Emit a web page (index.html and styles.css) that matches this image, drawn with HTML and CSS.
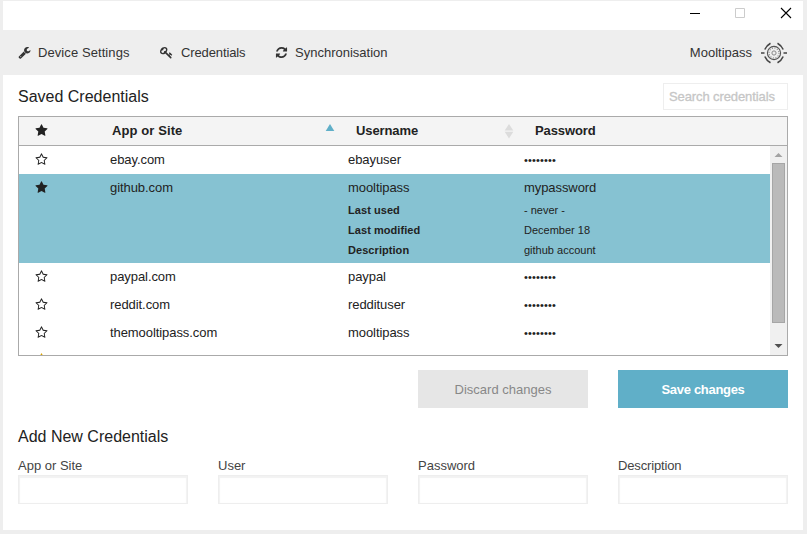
FILE: index.html
```html
<!DOCTYPE html>
<html lang="en">
<head>
<meta charset="utf-8">
<title>Mooltipass</title>
<link rel="stylesheet" href="styles.css">
</head>
<body>
<svg class="sprite" aria-hidden="true">
  <symbol id="star" viewBox="0 0 1792 1792"><path d="M1728 647q0 22-26 48l-363 354 86 500q1 7 1 20 0 21-10.5 35.500t-30.500 14.500q-19 0-40-12l-449-236-449 236q-22 12-40 12-21 0-31.500-14.500t-10.500-35.500q0-6 2-20l86-500-364-354q-25-27-25-48 0-37 56-46l502-73 225-455q19-41 49-41t49 41l225 455 502 73q56 9 56 46z"/></symbol>
  <symbol id="star-o" viewBox="0 0 1792 1792"><path d="M1201 1004l306-297-422-62-189-382-189 382-422 62 306 297-73 421 378-199 377 199zm527-357q0 22-26 48l-363 354 86 500q1 7 1 20 0 50-41 50-19 0-40-12l-449-236-449 236q-22 12-40 12-21 0-31.500-14.500t-10.500-35.500q0-6 2-20l86-500-364-354q-25-27-25-48 0-37 56-46l502-73 225-455q19-41 49-41t49 41l225 455 502 73q56 9 56 46z"/></symbol>
</svg>
<div class="window">
  <header class="titlebar">
    <svg class="control" viewBox="0 0 12 12"><path d="M0 6.500h10" stroke="#000"/></svg>
    <svg class="control" viewBox="0 0 12 12"><path d="M.5 1.500h9v9h-9z" fill="none" stroke="#ccc"/></svg>
    <svg class="control" viewBox="0 0 12 12"><path d="M1 1l10 10M11 1L1 11" stroke="#000" stroke-width="1.100"/></svg>
  </header>
  <nav class="nav">
    <a class="tab tab-settings"><svg class="icon" viewBox="0 0 1792 1792"><path d="M448 1472q0-26-19-45t-45-19-45 19-19 45 19 45 45 19 45-19 19-45zm644-420l-682 682q-37 37-90 37-52 0-91-37l-106-108q-38-36-38-90 0-53 38-91l681-681q39 98 114.500 173.500t173.500 114.500zm634-435q0 39-23 106-47 134-164.500 217.500t-258.500 83.500q-185 0-316.500-131.500t-131.500-316.500 131.500-316.500 316.500-131.500q58 0 121.500 16.500t107.500 46.500q16 11 16 28t-16 28l-293 169v224l193 107q5-3 79-48.500t135.500-81 70.500-35.500q15 0 23.500 10t8.500 25z"/></svg><span>Device Settings</span></a>
    <a class="tab tab-credentials"><svg class="icon" viewBox="0 0 1792 1792"><path d="M832 512q0-80-56-136t-136-56-136 56-56 136q0 42 19 83-41-19-83-19-80 0-136 56t-56 136 56 136 136 56 136-56 56-136q0-42-19-83 41 19 83 19 80 0 136-56t56-136zm851 704q0 17-49 66t-66 49q-9 0-28.500-16t-36.500-33-38.500-40-24.500-26l-96 96 220 220q28 28 28 68 0 42-39 81t-81 39q-40 0-68-28l-671-671q-176 131-365 131-163 0-265.500-102.500t-102.500-265.500q0-160 95-313t248-248 313-95q163 0 265.500 102.500t102.500 265.500q0 189-131 365l355 355 96-96q-3-3-26-24.500t-40-38.500-33-36.500-16-28.500q0-17 49-66t66-49q13 0 23 10 6 6 46 44.500t82 79.500 86.500 86 73 78 28.500 41z"/></svg><span>Credentials</span></a>
    <a class="tab tab-sync"><svg class="icon" viewBox="0 0 1792 1792"><path d="M1639 1056q0 5-1 7-64 268-268 434.500t-478 166.500q-146 0-282.500-55t-243.500-157l-129 129q-19 19-45 19t-45-19-19-45v-448q0-26 19-45t45-19h448q26 0 45 19t19 45-19 45l-137 137q71 66 161 102t187 36q134 0 250-65t186-179q11-17 53-117 8-23 30-23h192q13 0 22.500 9.500t9.500 22.500zm25-800v448q0 26-19 45t-45 19h-448q-26 0-45-19t-19-45 19-45l138-138q-148-137-349-137-134 0-250 65t-186 179q-11 17-53 117-8 23-30 23h-199q-13 0-22.500-9.500t-9.500-22.500v-7q65-268 270-434.500t480-166.500q146 0 284 55.500t245 156.500l130-129q19-19 45-19t45 19 19 45z"/></svg><span>Synchronisation</span></a>
    <div class="brand"><span>Mooltipass</span>
      <svg class="logo" viewBox="0 0 28 22" fill="none" stroke="#444"><circle cx="14" cy="11" r="6.600" stroke-width="1.100" stroke="#555"/><circle cx="14" cy="11" r="5" stroke-width="1.200" stroke-dasharray="1 1.600" stroke="#888"/><circle cx="14" cy="11" r="2.100" stroke="#888"/><path stroke-width="1.600" d="M1 11H4.500M23.500 11h3.500M4.800 7.500Q6.500 3.500 10.500 1.200M23.200 7.500Q21.500 3.500 17.500 1.200M4.800 14.500Q6.500 18.500 10.500 20.800M23.200 14.500Q21.500 18.500 17.500 20.800"/></svg>
    </div>
  </nav>
  <main class="content">
    <div class="heading-row"><h2>Saved Credentials</h2><input class="search" placeholder="Search credentials"></div>
    <section class="table">
      <div class="thead">
        <svg class="star"><use href="#star"/></svg>
        <span class="th-app">App or Site</span>
        <svg class="sort" viewBox="0 0 8 16"><path d="M4 1l4.300 7H-.3z" fill="#60afc8"/></svg>
        <span>Username</span>
        <svg class="sort" viewBox="0 0 8 16"><path d="M4 1l4.300 6.500H-.3zM-.3 8.700h8.600L4 15.500z" fill="#dcdcdc"/></svg>
        <span>Password</span>
      </div>
      <div class="body">
        <div class="rows">
          <div class="row"><svg class="star"><use href="#star-o"/></svg><span>ebay.com</span><span>ebayuser</span><span class="dots">••••••••</span></div>
          <div class="row selected">
            <svg class="star"><use href="#star"/></svg><span>github.com</span><span>mooltipass</span><span>mypassword</span>
            <b>Last used</b><small>- never -</small>
            <b>Last modified</b><small>December 18</small>
            <b>Description</b><small>github account</small>
          </div>
          <div class="row"><svg class="star"><use href="#star-o"/></svg><span>paypal.com</span><span>paypal</span><span class="dots">••••••••</span></div>
          <div class="row"><svg class="star"><use href="#star-o"/></svg><span>reddit.com</span><span>reddituser</span><span class="dots">••••••••</span></div>
          <div class="row"><svg class="star"><use href="#star-o"/></svg><span>themooltipass.com</span><span>mooltipass</span><span class="dots">••••••••</span></div>
          <div class="row"><svg class="star gold"><use href="#star-o"/></svg></div>
        </div>
        <div class="scrollbar">
          <svg class="arrow" viewBox="0 0 17 17"><path d="M8.500 7L12.500 11h-8z" fill="#a3a3a3"/></svg>
          <div class="thumb"></div>
          <svg class="arrow" viewBox="0 0 17 17"><path d="M4.500 6h8l-4 4z" fill="#505050"/></svg>
        </div>
      </div>
    </section>
    <div class="actions"><button class="discard">Discard changes</button><button class="save">Save changes</button></div>
    <h2 class="h-add">Add New Credentials</h2>
    <form class="fields">
      <label>App or Site<input></label>
      <label>User<input></label>
      <label>Password<input></label>
      <label class="description">Description<input></label>
    </form>
  </main>
</div>
</body>
</html>
```
FILE: styles.css
```css
* { box-sizing: border-box; }
body {
  margin: 0;
  padding: 1px 4px 4px 3px;
  height: 534px;
  overflow: hidden;
  background: #eee;
  font: 13px/20px "Liberation Sans", Arial, sans-serif;
  color: #222;
}
.sprite { display: block; width: 0; height: 0; position: absolute; }
.window { height: 529px; background: #fff; }
.titlebar { height: 29px; display: flex; justify-content: flex-end; gap: 33px; padding: 6px 11px 0 0; }
.control { width: 12px; height: 12px; }
.nav { height: 45px; background: #eee; display: flex; align-items: center; padding: 0 15px; color: #333; }
.tab { display: flex; align-items: center; gap: 7px; }
.icon { width: 13px; height: 13px; fill: #333; }
.tab-settings { width: 142px; letter-spacing: .08px; }
.tab-credentials { width: 115px; gap: 8px; letter-spacing: -.12px; }
.tab-sync { letter-spacing: 0; }
.brand { margin-left: auto; display: flex; align-items: center; gap: 8px; }
.logo { width: 28px; height: 22px; }
.content { padding: 8px 15px 0; }
.heading-row { display: flex; justify-content: space-between; height: 33px; }
h2 { margin: 0; padding-top: 1px; font-size: 16px; font-weight: 400; line-height: 26px; }
.search { width: 125px; height: 27px; border: 1px solid #eee; padding: 0 5px; font: inherit; letter-spacing: -.1px; outline: 0; }
.search::placeholder { color: #c6c6c6; opacity: 1; -webkit-text-stroke: .3px #c6c6c6; }
.table { height: 240px; border: 1px solid #aaa; }
.thead {
  height: 29px;
  display: grid;
  grid-template-columns: 77px 214px 30px 149px 30px 1fr;
  align-items: center;
  padding-left: 16px;
  background: #f4f4f4;
  border-bottom: 1px solid #aaa;
  font-weight: 700;
  letter-spacing: -.1px;
}
.th-app { letter-spacing: .1px; }
.star { width: 13px; height: 13px; margin-left: -.5px; fill: #222; display: block; }
.thead .star { margin-bottom: 1px; }
.sort { width: 8px; height: 16px; overflow: visible; }
.body { height: 209px; display: flex; overflow: hidden; }
.rows { flex: 1; }
.row {
  display: grid;
  grid-template-columns: 75px 238px 176px 1fr;
  padding: 4px 0 4px 16px;
  min-height: 28px;
  letter-spacing: -.07px;
}
.row .star { margin-top: 3px; }
.row .gold { fill: #d9a300; margin-top: 2px; }
.selected { background: #86c2d2; padding-bottom: 3px; grid-template-rows: 22px 20px 20px 20px; }
.selected b { grid-column: 3; font-size: 11px; letter-spacing: .06px; }
.selected small { grid-column: 4; font-size: 11px; letter-spacing: 0; }
.dots { font-size: 11px; letter-spacing: .15px; }
.scrollbar { width: 17px; background: #f0f0f0; display: flex; flex-direction: column; align-items: center; }
.arrow { width: 17px; height: 17px; }
.thumb { width: 13px; height: 160px; background: #bababa; border: 1px solid #a6a6a6; margin-bottom: 15px; }
.actions { display: flex; justify-content: flex-end; gap: 30px; margin-top: 14px; }
button { width: 170px; height: 38px; border: 0; padding: 2px 0 0; font: inherit; }
.discard { background: #e6e6e6; color: #888; }
.save { background: #60afc8; color: #fff; font-weight: 700; letter-spacing: -.3px; }
.h-add { margin-top: 15px; }
.fields { display: grid; grid-template-columns: repeat(4, 170px); gap: 30px; margin-top: 6px; color: #444; }
.description { letter-spacing: -.15px; }
.fields input { display: block; width: 170px; height: 29px; margin-top: -1px; padding: 0 5px; border: 1px solid #eee; box-shadow: inset 0 1px 1px 1px #f2f2f2; font: inherit; }
```
